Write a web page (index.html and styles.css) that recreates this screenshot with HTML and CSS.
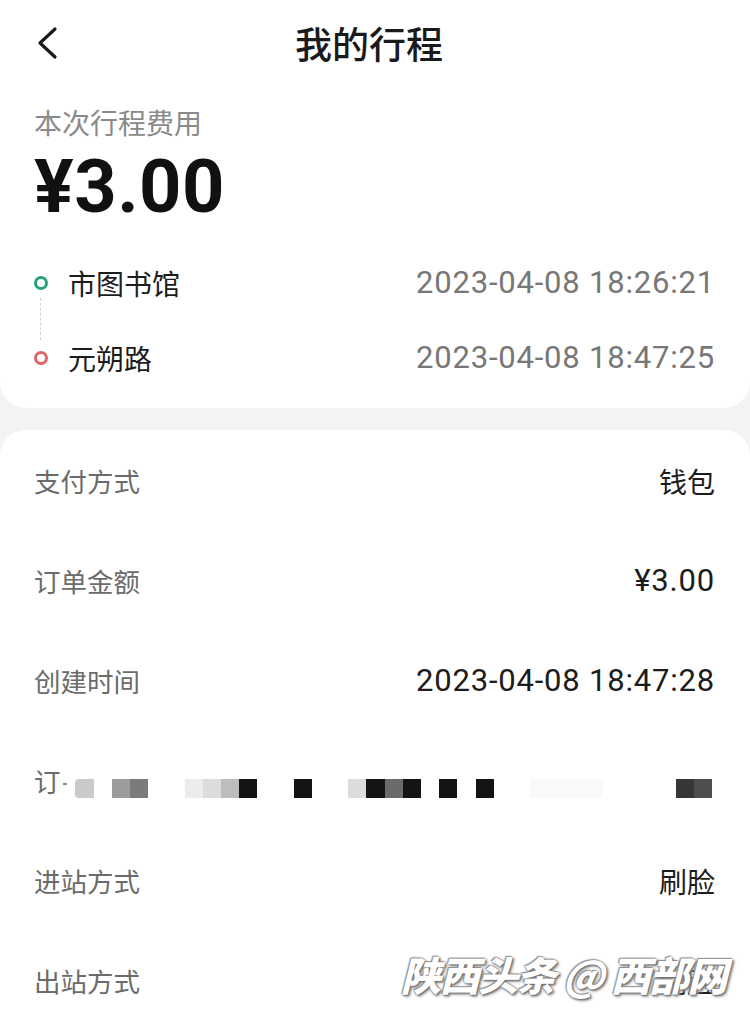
FILE: index.html
```html
<!DOCTYPE html>
<html lang="zh-CN">
<head>
    <meta charset="UTF-8">
    <meta name="viewport" content="width=device-width, initial-scale=1.0">
    <title>我的行程</title>
    <link rel="stylesheet" href="styles.css">
</head>
<body>
    <div class="trip-card">
        <div class="header">
            <svg class="back" width="24" height="34" viewBox="0 0 24 34">
                <path d="M20 3 L5 17 L20 31" fill="none" stroke="#1a1a1a" stroke-width="3.2" stroke-linecap="round" stroke-linejoin="round"/>
            </svg>
            <h1>我的行程</h1>
            <span></span>
        </div>

        <div class="fee-label">本次行程费用</div>
        <div class="fee">¥3.00</div>

        <div class="route">
            <div class="stop">
                <span class="dot start"></span>
                <span class="station">市图书馆</span>
                <span class="time">2023-04-08 18:26:21</span>
            </div>
            <div class="stop">
                <span class="dot end"></span>
                <span class="station">元朔路</span>
                <span class="time">2023-04-08 18:47:25</span>
            </div>
        </div>
    </div>

    <div class="detail-card">
        <div class="row">
            <span class="label">支付方式</span>
            <span class="value">钱包</span>
        </div>
        <div class="row">
            <span class="label">订单金额</span>
            <span class="value num">¥3.00</span>
        </div>
        <div class="row">
            <span class="label">创建时间</span>
            <span class="value num">2023-04-08 18:47:28</span>
        </div>
        <div class="row">
            <span class="label order">订<span class="tick"></span></span>
            <div class="mosaic">
                <span class="px g2"></span><span class="px"></span><span class="px g4"></span><span class="px g5"></span>
                <span class="px"></span><span class="px"></span><span class="px g0"></span><span class="px g1"></span>
                <span class="px g3"></span><span class="px k"></span><span class="px"></span><span class="px"></span>
                <span class="px k"></span><span class="px"></span><span class="px"></span><span class="px g1"></span>
                <span class="px k"></span><span class="px g6"></span><span class="px k"></span><span class="px"></span>
                <span class="px k"></span><span class="px"></span><span class="px k"></span><span class="px"></span>
                <span class="px"></span><span class="px f"></span><span class="px f"></span><span class="px f"></span>
                <span class="px f"></span><span class="px"></span><span class="px"></span><span class="px"></span>
                <span class="px"></span><span class="px g8"></span><span class="px g7"></span>
            </div>
        </div>
        <div class="row">
            <span class="label">进站方式</span>
            <span class="value">刷脸</span>
        </div>
        <div class="row">
            <span class="label">出站方式</span>
            <span class="value">刷脸</span>
        </div>

        <div class="watermark">陕西头条 @ 西部网</div>
    </div>
</body>
</html>
```

FILE: styles.css
```css
body {
    margin: 0;
    background-color: #f3f3f3;
    font-family: Roboto, "Noto Sans CJK SC", sans-serif;
    color: #1c1c1c;
    width: 750px;
    height: 1028px;
    overflow: hidden;
}
.trip-card {
    background-color: #fff;
    border-radius: 0 0 26px 26px;
    padding: 0 35px 11px 34px;
    margin-bottom: 22px;
}
.header {
    height: 86px;
    display: grid;
    grid-template-columns: 60px 1fr 60px;
    align-items: center;
}
.back {
    margin-left: 1px;
    margin-top: -1px;
}
.header h1 {
    margin: 0 0 0 -11px;
    text-align: center;
    font-family: "Noto Sans CJK SC", sans-serif;
    font-size: 37px;
    font-weight: 500;
    color: #1a1a1a;
    line-height: 40px;
}
.fee-label {
    margin-top: 16px;
    height: 40px;
    line-height: 40px;
    font-family: "Noto Sans CJK SC", sans-serif;
    font-size: 28px;
    color: #8a8a8a;
}
.fee {
    margin-top: 5px;
    height: 80px;
    line-height: 80px;
    font-size: 74px;
    font-weight: 700;
    color: #111;
    letter-spacing: 0.5px;
}
.route {
    padding-top: 18px;
    padding-bottom: 2px;
}
.stop {
    height: 75px;
    display: flex;
    align-items: center;
}
.dot {
    position: relative;
    width: 8px;
    height: 8px;
    border: 3px solid;
    border-radius: 50%;
    margin-right: 20px;
}
.dot.start {
    border-color: #27a27b;
}
.dot.end {
    border-color: #e06666;
}
.dot.start::after {
    content: "";
    position: absolute;
    left: 3px;
    top: 19px;
    height: 42px;
    border-left: 1.5px dashed #e2cdd0;
}
.station {
    flex: 1;
    font-family: "Noto Sans CJK SC", sans-serif;
    font-size: 28px;
    color: #1c1c1c;
    line-height: 40px;
}
.time {
    font-size: 31px;
    color: #777;
    letter-spacing: 0.8px;
    line-height: 40px;
}
.detail-card {
    position: relative;
    box-sizing: border-box;
    background-color: #fff;
    border-radius: 26px 26px 0 0;
    padding: 1px 35px 0 34px;
    height: 598px;
}
.row {
    height: 100px;
    display: flex;
    align-items: center;
    justify-content: space-between;
}
.label {
    font-family: "Noto Sans CJK SC", sans-serif;
    font-size: 26.5px;
    color: #6b6b6b;
    line-height: 40px;
}
.value {
    font-family: "Noto Sans CJK SC", sans-serif;
    font-size: 28px;
    color: #1c1c1c;
    line-height: 40px;
}
.value.num {
    font-family: Roboto, "Noto Sans CJK SC", sans-serif;
    font-size: 31px;
    letter-spacing: 0.8px;
}
.order {
    width: 38px;
    display: flex;
    align-items: center;
}
.tick {
    width: 4px;
    height: 2px;
    background-color: #888;
    margin-left: 2px;
    margin-top: 6px;
}
.mosaic {
    display: flex;
    margin-top: 14px;
    margin-right: 3px;
}
.px {
    width: 18.2px;
    height: 19px;
}
.k { background-color: #141414; }
.g0 { background-color: #ececec; }
.g1 { background-color: #dcdcdc; }
.g2 { background-color: #cacaca; border-radius: 4px 0 0 4px; }
.g3 { background-color: #bdbdbd; }
.g4 { background-color: #9c9c9c; }
.g5 { background-color: #7b7b7b; }
.g6 { background-color: #6b6b6b; }
.g7 { background-color: #4e4e4e; }
.g8 { background-color: #363636; }
.f { background-color: #f9f9f9; }
.watermark {
    position: absolute;
    right: 24px;
    bottom: 28px;
    font-family: "Noto Sans CJK SC", sans-serif;
    font-size: 40px;
    line-height: 52px;
    font-weight: 900;
    font-style: italic;
    letter-spacing: -1.5px;
    color: #fff;
    text-shadow: 0 0 2px #777, 1px 1px 2px #666, -1px -1px 1px #999, 2px 2px 3px #aaa;
}
```
